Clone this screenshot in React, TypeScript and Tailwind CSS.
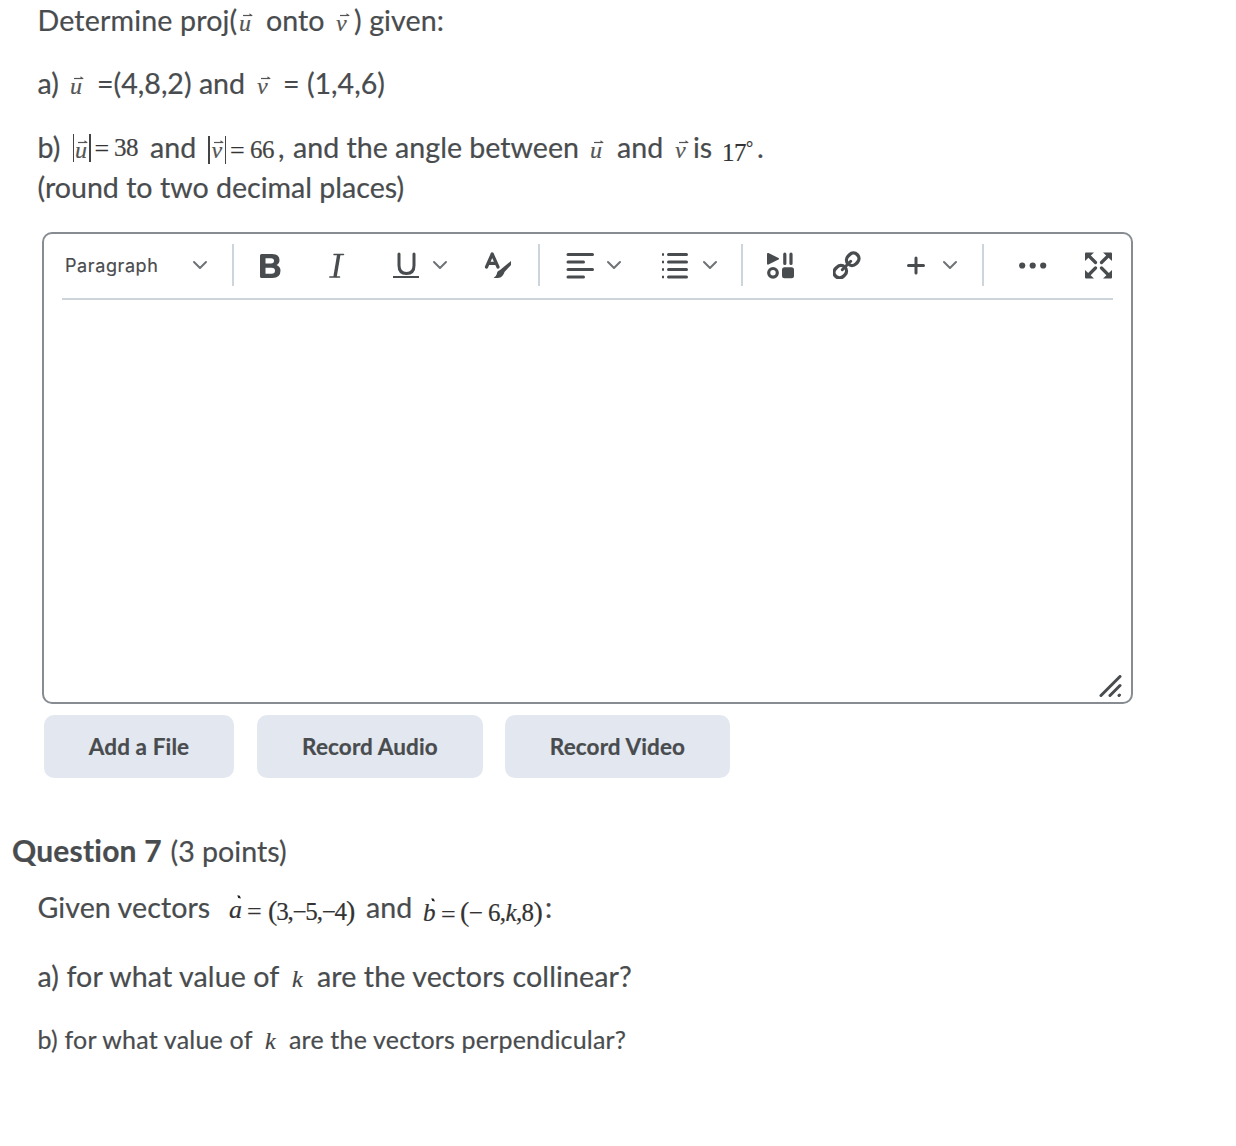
import React from "react";

type Kids = { className?: string; children?: React.ReactNode };

const Line = ({ className = "", children }: Kids) => (
  <div className={`flex h-10 items-baseline whitespace-pre text-[28.6px] leading-10 ${className}`}>{children}</div>
);

const T = ({ className = "", children }: Kids) => <span className={`block shrink-0 ${className}`}>{children}</span>;

const M = ({ className = "", children }: Kids) => (
  <span className={`block shrink-0 font-['Liberation_Serif',serif] leading-none ${className}`}>
    {children}
  </span>
);

const Vec = ({ name, className = "" }: { name: string; className?: string }) => (
  <M className={`relative text-[24px] italic text-[#555] ${className}`}>
    {name}
    <svg className="absolute left-[4px] top-[2px] h-[5px] w-[10px]" viewBox="0 0 10 5">
      <path d="M0 2.500H9" stroke="#555" strokeWidth="1.200" />
      <path d="M6.500 0.300L10 2.800H6.500z" fill="#555" />
    </svg>
  </M>
);

const Bar = ({ className = "" }: Kids) => <span className={`block h-[28px] w-[1.5px] shrink-0 self-start bg-[#444] ${className}`} />;

const Dotted = ({ name, className = "" }: { name: string; className?: string }) => (
  <M className={`relative italic text-[#333] ${className}`}>
    {name}
    <svg className="absolute left-[8px] top-[-2px] h-[4px] w-[4px]" viewBox="0 0 4 4">
      <path d="M0.3 0.300L2.8 0.8L3.9 3.6L1.2 3z" fill="#222" />
    </svg>
  </M>
);

const Icon = ({ w, children, className = "" }: { w: number; children: React.ReactNode; className?: string }) => (
  <svg className={`shrink-0 ${className}`} width={w} height="28" viewBox={`0 0 ${w} 28`} fill="none" stroke="#494c4e" strokeLinecap="round" strokeLinejoin="round">
    {children}
  </svg>
);

const Chevron = ({ className = "" }: Kids) => (
  <Icon w={16} className={className}>
    <path d="M2 11L8 17L14 11" stroke="#6e7376" strokeWidth="2" />
  </Icon>
);

const Sep = ({ className = "" }: Kids) => <span className={`h-[42px] w-[2px] shrink-0 bg-[#cdd5dc] ${className}`} />;

const Btn = ({ className = "", children }: Kids) => (
  <button className={`h-[63px] rounded-[10px] bg-[#e3e8f0] text-[22.5px] font-bold tracking-[0.12px] ${className}`}>{children}</button>
);

export default function App() {
  return (
    <main className="h-[1146px] w-[1236px] overflow-hidden bg-white font-['Lato',sans-serif] text-[#494c4e] [font-variant-ligatures:none] [-webkit-text-stroke:0.2px_currentColor]">
      <section className="pl-[37.5px]">
        <Line>
          <T className="w-[201.5px] tracking-[0.15px]">Determine proj(</T>
          <Vec name="u" className="w-[27px]" />
          <T className="w-[70px]">onto</T>
          <Vec name="v" className="w-[18px]" />
          <T className="tracking-[0.1px]">) given:</T>
        </Line>
        <Line className="mt-[23px]">
          <T className="w-[32.5px]">a)</T>
          <Vec name="u" className="w-[27px]" />
          <T className="w-[160px]">=(4,8,2) and</T>
          <Vec name="v" className="w-[26px]" />
          <T>= (1,4,6)</T>
        </Line>
        <Line className="mt-6">
          <T className="w-[35px]">b)</T>
          <Bar className="mt-[7px]" />
          <Vec name="u" className="w-[15px] pl-px" />
          <Bar className="mt-[7px]" />
          <M className="w-[23.5px] -translate-y-px pl-1 text-[26px] text-[#333]">=</M>
          <M className="w-[36px] -translate-y-0.5 text-[25px] tracking-[-0.5px] text-[#444]">38</M>
          <T className="w-[58px]">and</T>
          <Bar className="mt-[9px]" />
          <Vec name="v" className="w-[15px] pl-0.5" />
          <Bar className="mt-[9px]" />
          <M className="w-[24px] translate-y-px pl-1 text-[26px] text-[#333]">=</M>
          <M className="w-[28px] text-[25px] tracking-[-0.5px] text-[#444]">66</M>
          <T className="w-[15px]">,</T>
          <T className="w-[297px]">and the angle between</T>
          <Vec name="u" className="w-[27px]" />
          <T className="w-[58px]">and</T>
          <Vec name="v" className="w-[18px]" />
          <T className="w-[29px]">is</T>
          <M className="relative w-[35px] translate-y-[3px] text-[25px] tracking-[-0.5px] text-[#333]">
            17<span className="absolute left-[24px] top-[-1px] text-[18px]">°</span>
          </M>
          <T>.</T>
        </Line>
        <Line>
          <T>(round to two decimal places)</T>
        </Line>
      </section>

      <section className="ml-[42px] mt-[25px] flex h-[472px] w-[1091px] flex-col rounded-[10px] border-2 border-[#868c91]">
        <div className="mx-[18px] flex h-[66px] items-center border-b-2 border-[#cdd5dc] pb-[2px]">
          <span className="w-[130px] pl-[3px] font-['Inter',sans-serif] text-[18px] tracking-[0.6px]">Paragraph</span>
          <Chevron />
          <Sep className="ml-[24px]" />
          <Icon w={22} className="ml-[26px]">
            <path fillRule="evenodd" d="M0 4.5Q0 3 1.500 3H12Q19.500 3 19.500 9Q19.500 12.500 16.500 14Q20.500 15.500 20.500 19.500Q20.500 27 12.500 27H1.500Q0 27 0 25.500ZM5.500 7.200V12.500H11Q14 12.500 14 9.800Q14 7.200 11 7.200ZM5.500 16.800V22.700H11.500Q15 22.700 15 19.700Q15 16.800 11.500 16.800Z" fill="#494c4e" stroke="none" />
          </Icon>
          <Icon w={16} className="ml-[47px]">
            <path d="M5 3.500H14.500M0.800 26H10.500" strokeWidth="1.500" />
            <path d="M9.800 3.500L6 26" strokeWidth="3.400" strokeLinecap="butt" />
          </Icon>
          <Icon w={26} className="ml-[48px]">
            <path d="M6 3V14.500Q6 22.500 13.500 22.500Q21 22.500 21 14.500V3" strokeWidth="3" />
            <path d="M0 26H26" strokeWidth="2" strokeLinecap="butt" />
          </Icon>
          <Chevron className="ml-[13px]" />
          <Icon w={28} className="ml-[36px]">
            <path d="M2.500 16L8.200 3L14 16M4.500 12.300H12" strokeWidth="3.200" />
            <path d="M27 10V14L20.500 21Q19 26.500 14 27H9.500Q12.500 25 12.800 23Q13 20 16 19Z" fill="#494c4e" stroke="none" />
          </Icon>
          <Sep className="ml-[26px]" />
          <Icon w={28} className="ml-[26px]">
            <path d="M2 3.500H26.500M2 11H17.500M2 18.500H26.500M2 26H17.500" strokeWidth="3" />
          </Icon>
          <Chevron className="ml-[12px]" />
          <Icon w={27} className="ml-[40px]">
            <path d="M6.500 3.500H24.500M6.500 11H24.500M6.500 18.500H24.500M6.500 26H24.500" strokeWidth="3" />
            <path d="M0 3.500H2M0 11H2M0 18.500H2M0 26H2" strokeWidth="2.600" strokeLinecap="butt" />
          </Icon>
          <Chevron className="ml-[13px]" />
          <Sep className="ml-[23px]" />
          <Icon w={28} className="ml-[24px]">
            <path d="M0 3Q0 1.500 1.500 2L11.500 7Q12.500 7.700 11.500 8.500L1.500 13.500Q0 14 0 12.500Z" fill="#494c4e" stroke="none" />
            <path d="M17.800 3.200V12.500M24 3.200V12.500" strokeWidth="3.200" />
            <circle cx="6" cy="21.800" r="4.300" strokeWidth="3.200" />
            <rect x="15" y="16.300" width="12" height="11" rx="2.500" fill="#494c4e" stroke="none" />
          </Icon>
          <Icon w={28} className="ml-[38px]">
            <g strokeWidth="3.400" transform="rotate(-45 13.500 14.500)">
              <rect x="-1.800" y="9" width="13" height="11" rx="5.500" />
              <rect x="15.800" y="9" width="13" height="11" rx="5.500" />
              <path d="M7.500 14.500H19.500" strokeWidth="3" />
            </g>
          </Icon>
          <Icon w={18} className="ml-[46px]">
            <path d="M1.500 14.500H16.500M9 7V22" strokeWidth="3" />
          </Icon>
          <Chevron className="ml-[17px]" />
          <Sep className="ml-[24px]" />
          <Icon w={28} className="ml-[35px]">
            <g fill="#494c4e" stroke="none">
              <circle cx="3.200" cy="14.500" r="3.100" />
              <circle cx="13.700" cy="14.500" r="3.100" />
              <circle cx="24.200" cy="14.500" r="3.100" />
            </g>
          </Icon>
          <Icon w={28} className="ml-[38px]">
            <path d="M4 5L10.500 11.500M23 5L16.500 11.500M4 23.500L10.500 17M23 23.500L16.500 17" strokeWidth="3.200" />
            <path d="M0 2.500V10L9 1.500H1Q0 1.500 0 2.500ZM27 2.500V10L18 1.500H26Q27 1.500 27 2.500ZM0 26.500V19L9 27.500H1Q0 27.500 0 26.500ZM27 26.500V19L18 27.500H26Q27 27.500 27 26.500Z" fill="#494c4e" stroke="none" />
          </Icon>
        </div>
        <svg className="mb-[4px] mr-[8px] mt-auto self-end" width="24" height="23" viewBox="0 0 24 23" fill="none" stroke="#494c4e" strokeWidth="3" strokeLinecap="round">
          <path d="M2 20.500L21 1.500M11 20.500L21 10.500M20 20.500L20.500 20" />
        </svg>
      </section>

      <div className="ml-[44px] mt-[11px] flex">
        <Btn className="w-[190px]">Add a File</Btn>
        <Btn className="ml-[23px] w-[226px]">Record Audio</Btn>
        <Btn className="ml-[22px] w-[225px]">Record Video</Btn>
      </div>

      <section>
        <Line className="mt-[52px] pl-[12px]">
          <T className="w-[158.5px] text-[30px] font-bold tracking-[0.2px]">Question 7</T>
          <T>(3 points)</T>
        </Line>
        <Line className="mt-[17px] pl-[37.5px]">
          <T className="w-[191.5px] tracking-[0.07px]">Given vectors</T>
          <Dotted name="a" className="w-[18px] text-[26px]" />
          <M className="w-[21px] translate-y-0.5 text-[26px] text-[#333]">=</M>
          <M className="w-[98px] translate-y-0.5 text-[25px] tracking-[-1.2px] text-[#333]">
            <span className="text-[28px]">(</span>3,−5,−4<span className="text-[28px]">)</span>
          </M>
          <T className="w-[57px]">and</T>
          <Dotted name="b" className="w-[18px] translate-y-[3px] text-[25px]" />
          <M className="w-[19px] translate-y-[5px] text-[26px] text-[#333]">=</M>
          <M className="w-[85px] translate-y-[3px] text-[25px] tracking-[-0.6px] text-[#333]">
            <span className="text-[28px]">(</span>− 6,<i>k</i>,8<span className="text-[28px]">)</span>
          </M>
          <T>:</T>
        </Line>
        <Line className="mt-[29px] pl-[37.5px]">
          <T className="w-[254.5px] tracking-[0.1px]">a) for what value of</T>
          <M className="w-[25px] text-[24px] italic text-[#444]">k</M>
          <T className="tracking-[0.1px]">are the vectors collinear?</T>
        </Line>
        <Line className="mt-[23px] pl-[37.5px]">
          <T className="w-[227.5px] text-[25px] tracking-[0.2px]">b) for what value of</T>
          <M className="w-[24px] text-[24px] italic text-[#444]">k</M>
          <T className="text-[25px] tracking-[0.19px]">are the vectors perpendicular?</T>
        </Line>
      </section>
    </main>
  );
}
